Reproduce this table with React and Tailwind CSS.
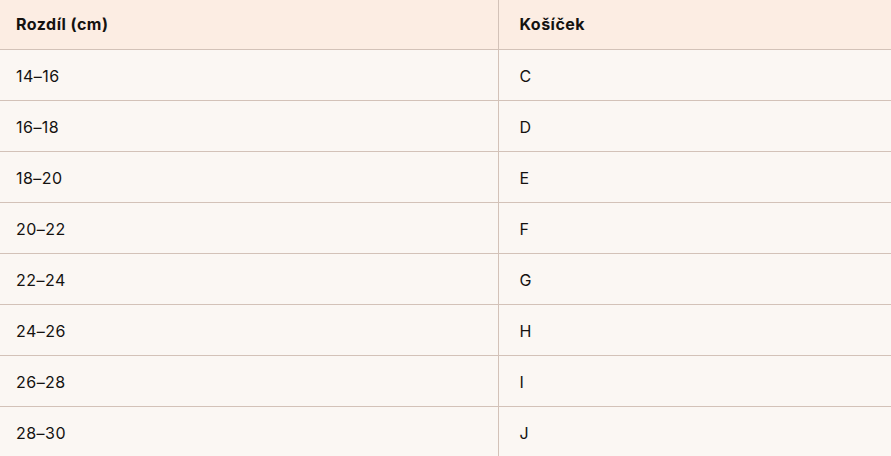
const rows = [
  ["14–16", "C"],
  ["16–18", "D"],
  ["18–20", "E"],
  ["20–22", "F"],
  ["22–24", "G"],
  ["24–26", "H"],
  ["26–28", "I"],
  ["28–30", "J"],
];

export default function App() {
  return (
    <div className="w-[891px] bg-[#fbf7f3] font-['Inter','Noto_Sans',sans-serif] text-[16px] tracking-[0.03em] text-[#141210]">
      <table className="w-full border-collapse table-fixed">
        <thead>
          <tr className="bg-[#fcede3] h-[49px]">
            <th className="w-[498px] border-r border-[#d3c2b8] pl-4 text-left font-bold">
              Rozdíl (cm)
            </th>
            <th className="pl-[21px] text-left font-bold">Košíček</th>
          </tr>
        </thead>
        <tbody>
          {rows.map(([diff, cup]) => (
            <tr key={cup} className="h-[51px] border-t border-[#d3c2b8]">
              <td className="border-r border-[#d3c2b8] pl-4 pt-[2px]">{diff}</td>
              <td className="pl-[21px] pt-[2px]">{cup}</td>
            </tr>
          ))}
        </tbody>
      </table>
    </div>
  );
}
